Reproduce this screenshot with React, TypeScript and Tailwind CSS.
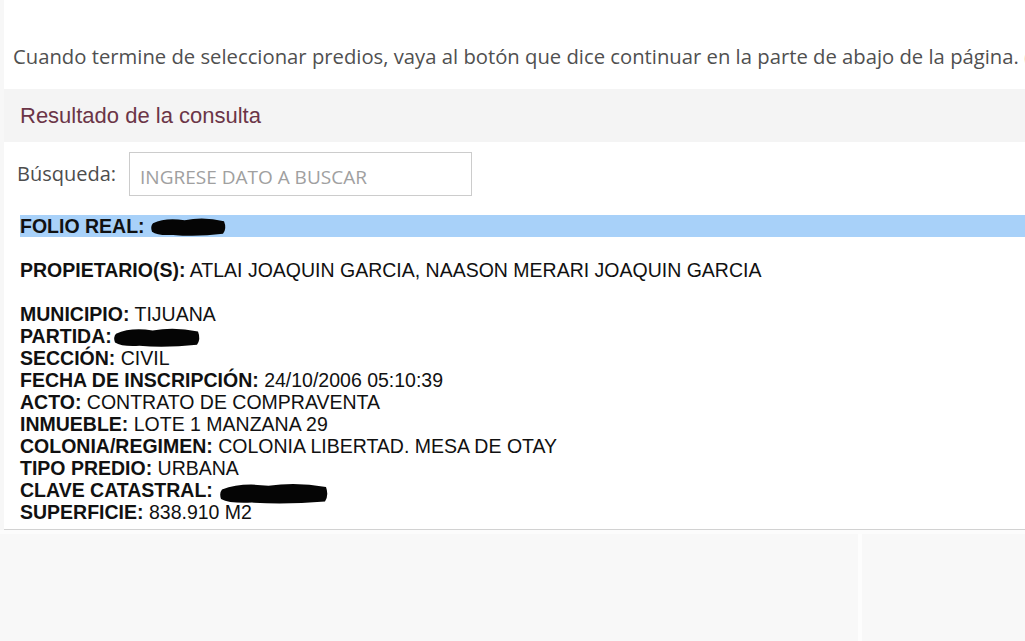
import React from 'react';

const arial = { fontFamily: '"Liberation Sans", Arial, sans-serif' };

// black marker scribble hiding a value
const Blob = ({ w, h, className = '' }: { w: number; h: number; className?: string }) => (
  <svg width={w} height={h} viewBox={`0 0 ${w} ${h}`} className={`inline-block align-middle ${className}`}>
    <path
      d={`M3 ${h * 0.35} Q${w * 0.2} ${h * 0.05} ${w * 0.45} ${h * 0.2} Q${w * 0.7} ${h * 0.02} ${w - 3} ${h * 0.25} Q${w} ${h * 0.6} ${w - 4} ${h * 0.85} Q${w * 0.6} ${h} ${w * 0.3} ${h * 0.9} Q${w * 0.1} ${h * 0.95} 2 ${h * 0.75} Q0 ${h * 0.5} 3 ${h * 0.35} Z`}
      fill="#050505"
    />
  </svg>
);

const Row = ({ label, children }: { label: string; children: React.ReactNode }) => (
  <div className="h-[22px] leading-[22px] whitespace-nowrap">
    <b className="font-bold">{label}</b> {children}
  </div>
);

export default function App() {
  return (
    <div className="w-[1025px] h-[641px] overflow-hidden bg-[#f7f7f7] flex flex-col">
      <div
        className="ml-[4px] h-[89px] bg-white pt-[42px] pl-[9px] text-[20.25px] leading-[28px] text-[#505050] whitespace-nowrap"
        style={{ fontFamily: '"Open Sans", sans-serif' }}
      >
        Cuando termine de seleccionar predios, vaya al botón que dice continuar en la parte de abajo de la página. (
      </div>

      <div className="ml-[4px] h-[53px] bg-[#f4f4f4] pl-[16px] flex items-center text-[22px] text-[#6b3547]" style={arial}>
        Resultado de la consulta
      </div>

      <div className="ml-[4px] bg-white border-b border-[#d2d2d2] pb-[6px]">
        <div className="flex items-center pt-[10px] pl-[13px]" style={{ fontFamily: '"Open Sans", sans-serif' }}>
          <span className="text-[20px] text-[#4d4d4d]">Búsqueda:</span>
          <div className="ml-[13px] w-[343px] h-[44px] border border-[#cccccc] flex items-center pl-[10px] pt-[6px] text-[19px] text-[#a0a0a0]">
            INGRESE DATO A BUSCAR
          </div>
        </div>

        <div className="mt-[19px] ml-[16px] text-[19.5px] text-[#111]" style={arial}>
          <div className="h-[22px] leading-[22px] bg-[#a8d1f9] flex items-center whitespace-nowrap">
            <b>FOLIO REAL:</b>
            <Blob w={77} h={21} className="ml-[5px] mt-[1px]" />
          </div>
          <div className="h-[22px]" />
          <Row label="PROPIETARIO(S):">ATLAI JOAQUIN GARCIA, NAASON MERARI JOAQUIN GARCIA</Row>
          <div className="h-[22px]" />
          <Row label="MUNICIPIO:">TIJUANA</Row>
          <div className="h-[22px] leading-[22px] flex items-center whitespace-nowrap">
            <b>PARTIDA:</b>
            <Blob w={88} h={22} className="ml-[1px] mt-[2px]" />
          </div>
          <Row label="SECCIÓN:">CIVIL</Row>
          <Row label="FECHA DE INSCRIPCIÓN:">24/10/2006 05:10:39</Row>
          <Row label="ACTO:">CONTRATO DE COMPRAVENTA</Row>
          <Row label="INMUEBLE:">LOTE 1 MANZANA 29</Row>
          <Row label="COLONIA/REGIMEN:">COLONIA LIBERTAD. MESA DE OTAY</Row>
          <Row label="TIPO PREDIO:">URBANA</Row>
          <div className="h-[22px] leading-[22px] flex items-center whitespace-nowrap">
            <b>CLAVE CATASTRAL:</b>
            <Blob w={110} h={24} className="ml-[6px] mt-[5px]" />
          </div>
          <Row label="SUPERFICIE:">838.910 M2</Row>
        </div>
      </div>

      <div className="h-[4px] bg-[#fcfcfc]" />
      <div className="flex-1 flex">
        <div className="w-[858px] bg-[#f8f8f8]" />
        <div className="w-[4px] bg-[#fdfdfd]" />
        <div className="flex-1 bg-[#f8f8f8]" />
      </div>
    </div>
  );
}
